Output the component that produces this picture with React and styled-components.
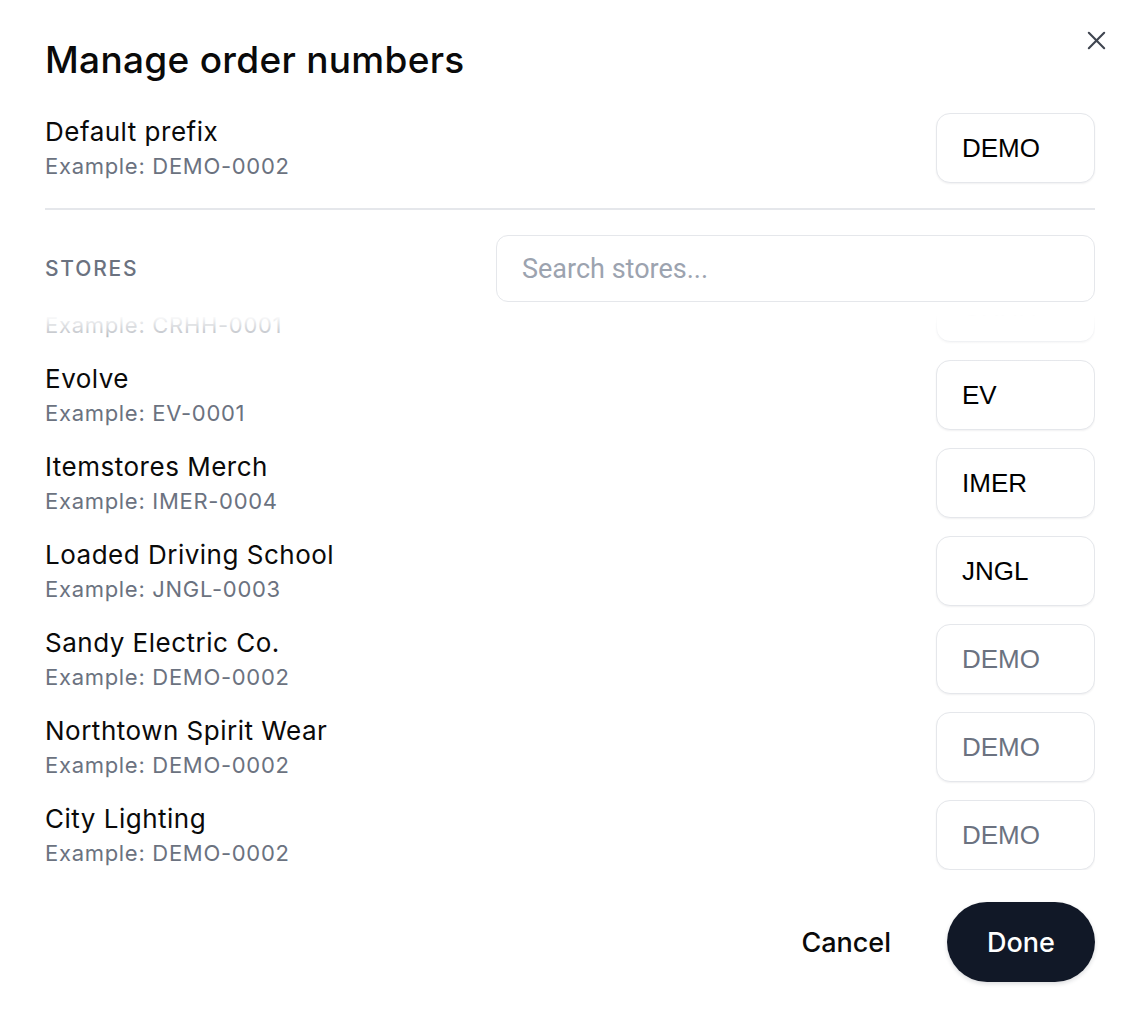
import { useLayoutEffect, useRef } from 'react'
import styled, { createGlobalStyle } from 'styled-components'

const GlobalStyle = createGlobalStyle`
  html, body {
    margin: 0;
    background: #ffffff;
  }
  * {
    box-sizing: border-box;
  }
`

const Modal = styled.div`
  position: relative;
  width: 1140px;
  height: 1022px;
  padding: 38px 45px 40px;
  display: flex;
  flex-direction: column;
  font-family: Inter, 'Noto Sans', sans-serif;
  color: #0a0a0a;
  background: #ffffff;
`

const Title = styled.h2`
  margin: 0;
  font-size: 37px;
  line-height: 44px;
  font-weight: 500;
  letter-spacing: 0.3px;
`

const CloseButton = styled.button`
  position: absolute;
  top: 28px;
  right: 32px;
  width: 24px;
  height: 24px;
  padding: 0;
  border: 0;
  background: none;
  color: #3f4550;
  display: flex;
  align-items: center;
  justify-content: center;
  cursor: pointer;
`

const Row = styled.div`
  display: flex;
  align-items: center;
  justify-content: space-between;
  height: 70px;
  flex-shrink: 0;
`

const Details = styled.div`
  display: flex;
  flex-direction: column;
  gap: 3px;
`

const Name = styled.span`
  font-size: 26px;
  line-height: 32px;
  font-weight: 400;
  letter-spacing: 0.5px;
`

const Hint = styled.span`
  font-size: 22px;
  line-height: 30px;
  letter-spacing: 0.7px;
  color: #6b7280;
`

const PrefixInput = styled.input`
  width: 159px;
  height: 70px;
  padding: 0 25px;
  border: 1.5px solid #e5e7eb;
  border-radius: 14px;
  background: #ffffff;
  box-shadow: 0 1px 2px rgba(17, 24, 39, 0.06);
  font-family: 'Liberation Sans', Arial, sans-serif;
  font-size: 26px;
  color: #000000;
  outline: none;

  &::placeholder {
    color: #6b7280;
  }
`

const DefaultRow = styled(Row)`
  margin-top: 31px;
`

const Divider = styled.hr`
  margin: 25px 0 0;
  border: 0;
  border-top: 2px solid #e5e7eb;
`

const StoresHeader = styled.div`
  margin-top: 25px;
  display: flex;
  align-items: center;
  justify-content: space-between;
`

const SectionLabel = styled.span`
  font-size: 21px;
  font-weight: 500;
  letter-spacing: 1.8px;
  text-transform: uppercase;
  color: #6b7280;
`

const SearchInput = styled.input`
  width: 599px;
  height: 67px;
  padding: 0 25px;
  border: 1.5px solid #e5e7eb;
  border-radius: 12px;
  font-family: Roboto, sans-serif;
  font-size: 27px;
  color: #111827;
  outline: none;

  &::placeholder {
    color: #9ca3af;
  }
`

const ListFrame = styled.div`
  position: relative;
  margin-top: 8px;
  height: 560px;
`

const List = styled.div`
  height: 100%;
  overflow-y: auto;
  scrollbar-width: none;
  display: flex;
  flex-direction: column;
  gap: 18px;

  &::-webkit-scrollbar {
    display: none;
  }
`

const TopFade = styled.div`
  position: absolute;
  top: 0;
  left: 0;
  right: 0;
  height: 52px;
  background: linear-gradient(to bottom, #ffffff 10%, rgba(255, 255, 255, 0));
  pointer-events: none;
`

const Footer = styled.div`
  margin-top: auto;
  display: flex;
  align-items: center;
  justify-content: flex-end;
  gap: 56px;
`

const TextButton = styled.button`
  border: 0;
  background: none;
  padding: 0;
  font-family: Inter, sans-serif;
  font-size: 27px;
  font-weight: 500;
  color: #0a0a0a;
  cursor: pointer;
`

const PrimaryButton = styled.button`
  width: 148px;
  height: 80px;
  border: 0;
  border-radius: 40px;
  background: #111827;
  color: #ffffff;
  font-family: Inter, sans-serif;
  font-size: 27px;
  font-weight: 500;
  box-shadow: 0 2px 4px rgba(17, 24, 39, 0.15);
  cursor: pointer;
`

const stores = [
  { name: 'Crosshatch', prefix: 'CRHH', example: 'CRHH-0001' },
  { name: 'Evolve', prefix: 'EV', example: 'EV-0001' },
  { name: 'Itemstores Merch', prefix: 'IMER', example: 'IMER-0004' },
  { name: 'Loaded Driving School', prefix: 'JNGL', example: 'JNGL-0003' },
  { name: 'Sandy Electric Co.', prefix: '', example: 'DEMO-0002' },
  { name: 'Northtown Spirit Wear', prefix: '', example: 'DEMO-0002' },
  { name: 'City Lighting', prefix: '', example: 'DEMO-0002' },
]

const CloseIcon = () => (
  <svg width="23" height="23" viewBox="0 0 24 24" fill="none" stroke="currentColor" strokeWidth="2.2" strokeLinecap="round">
    <path d="M4 4l16 16M20 4L4 20" />
  </svg>
)

const StoreRow = ({ store }) => (
  <Row>
    <Details>
      <Name>{store.name}</Name>
      <Hint>Example: {store.example}</Hint>
    </Details>
    <PrefixInput defaultValue={store.prefix} placeholder="DEMO" />
  </Row>
)

export default function App() {
  const listRef = useRef(null)

  // list is scrolled to the bottom, first row partly hidden under the fade
  useLayoutEffect(() => {
    if (listRef.current) listRef.current.scrollTop = 38
  }, [])

  return (
    <>
      <GlobalStyle />
      <Modal>
        <CloseButton aria-label="Close">
          <CloseIcon />
        </CloseButton>
        <Title>Manage order numbers</Title>
        <DefaultRow>
          <Details>
            <Name>Default prefix</Name>
            <Hint>Example: DEMO-0002</Hint>
          </Details>
          <PrefixInput defaultValue="DEMO" />
        </DefaultRow>
        <Divider />
        <StoresHeader>
          <SectionLabel>Stores</SectionLabel>
          <SearchInput placeholder="Search stores..." />
        </StoresHeader>
        <ListFrame>
          <List ref={listRef}>
            {stores.map(store => (
              <StoreRow key={store.name} store={store} />
            ))}
          </List>
          <TopFade />
        </ListFrame>
        <Footer>
          <TextButton>Cancel</TextButton>
          <PrimaryButton>Done</PrimaryButton>
        </Footer>
      </Modal>
    </>
  )
}
